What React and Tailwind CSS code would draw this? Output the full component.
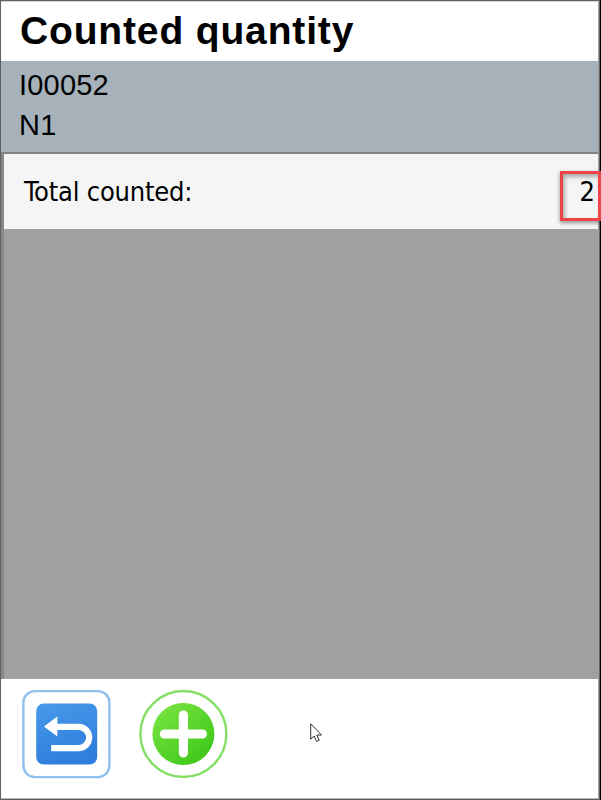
function BackIcon() {
  return (
    <svg width="90" height="90" viewBox="0 0 90 90" className="block">
      <defs>
        <linearGradient id="blue" x1="0" y1="0" x2="0.3" y2="1">
          <stop offset="0" stopColor="#4799e8" />
          <stop offset="1" stopColor="#2f7fde" />
        </linearGradient>
      </defs>
      <rect x="2.4" y="2.1" width="86" height="86" rx="11.5" fill="#fff" stroke="#8fc0ee" strokeWidth="2.4" />
      <rect x="15.2" y="14.5" width="61" height="61" rx="7.5" fill="url(#blue)" />
      <path d="M34 37.8H57.5A10.7 10.7 0 0 1 57.5 59.2H30.2" fill="none" stroke="#fff" strokeWidth="6.2" />
      <path d="M23 37.6L36.3 27.6V47.6Z" fill="#fff" />
    </svg>
  );
}

function AddIcon() {
  return (
    <svg width="90" height="90" viewBox="0 0 90 90" className="block">
      <defs>
        <linearGradient id="green" x1="0.15" y1="0.1" x2="0.85" y2="0.9">
          <stop offset="0" stopColor="#76e23f" />
          <stop offset="1" stopColor="#3fc81b" />
        </linearGradient>
      </defs>
      <circle cx="45.4" cy="45" r="43" fill="#fff" stroke="#85df66" strokeWidth="2.4" />
      <circle cx="45.4" cy="45" r="31" fill="url(#green)" />
      <path d="M45.4 26V64M26.4 45H64.4" fill="none" stroke="#fff" strokeWidth="9.2" strokeLinecap="round" />
    </svg>
  );
}

function Cursor() {
  return (
    <svg width="13" height="20" viewBox="0 0 13 20" className="absolute top-[723px] left-[310px]">
      <path
        d="M0.7 0.8V16.2L4.2 13L6.6 18.5L9.2 17.3L6.8 12H11.5Z"
        fill="#fff"
        stroke="#30303a"
        strokeWidth="1"
      />
    </svg>
  );
}

export default function App() {
  return (
    <div className="relative flex h-[800px] w-[601px] overflow-hidden bg-black pr-px font-['Liberation_Sans',Arial,sans-serif] text-black">
      <div className="flex flex-1 flex-col border border-t-[#626064] border-r-[#626064] border-b-[#5c5c5c] border-l-[#626064] bg-white">
        <div className="flex min-h-0 flex-1 flex-col border-t border-r border-b border-t-[#d5d4d6] border-r-[#a5a5a5] border-b-[#b5b5b5]">
          <header className="h-[59px] shrink-0 pl-[19px]">
            <h1 className="text-[39px] leading-[58px] font-bold tracking-[0.85px] whitespace-nowrap">Counted quantity</h1>
          </header>
          <section className="h-[91px] shrink-0 bg-[#a7b1b9] pt-[4px] pl-[18px] text-[29px] leading-[40px] tracking-[0.2px]">
            <div>I00052</div>
            <div>N1</div>
          </section>
          <main className="flex h-[527px] shrink-0 flex-col border-t-2 border-l-3 border-t-[#828385] border-l-[#8a8788] bg-[#a0a0a0]">
            <div className="flex h-[75px] items-center justify-between bg-[#f5f5f5] pr-[3px] pl-[20px] font-['DejaVu_Sans_Condensed','DejaVu_Sans',sans-serif] text-[27px] leading-[40px]">
              <span className="tracking-[-0.2px]">Total counted:</span>
              <span>2</span>
            </div>
          </main>
          <footer className="flex flex-1 gap-[27px] pt-[10px] pl-[20px]">
            <button className="h-[90px] w-[90px]" aria-label="Back"><BackIcon /></button>
            <button className="h-[90px] w-[90px]" aria-label="Add"><AddIcon /></button>
          </footer>
        </div>
      </div>
      <div className="absolute top-[171px] left-[560px] h-[50px] w-[41px] border-3 border-[#ee4447] shadow-[0_2px_4px_rgba(0,0,0,0.4),inset_2px_3px_4px_rgba(0,0,0,0.3)]" />
      <Cursor />
    </div>
  );
}
